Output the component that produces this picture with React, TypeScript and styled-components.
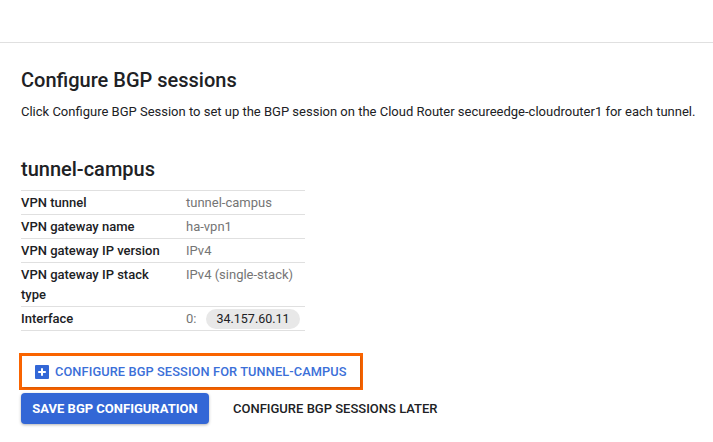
import { createGlobalStyle, styled } from "styled-components"

const rows: { label: string; value: string; chip?: string }[] = [
  { label: "VPN tunnel", value: "tunnel-campus" },
  { label: "VPN gateway name", value: "ha-vpn1" },
  { label: "VPN gateway IP version", value: "IPv4" },
  { label: "VPN gateway IP stack type", value: "IPv4 (single-stack)" },
  { label: "Interface", value: "0:", chip: "34.157.60.11" },
]

const App = () => {
  return (
    <Page>
      <GlobalStyle />
      <TopBar />
      <Content>
        <Title>Configure BGP sessions</Title>
        <Description>
          Click Configure BGP Session to set up the BGP session on the Cloud
          Router secureedge-cloudrouter1 for each tunnel.
        </Description>
        <TunnelName>tunnel-campus</TunnelName>
        <Table>
          {rows.map((row) => (
            <Row key={row.label}>
              <Label>{row.label}</Label>
              <Value>
                {row.value}
                {row.chip && <Chip>{row.chip}</Chip>}
              </Value>
            </Row>
          ))}
        </Table>
        <Highlight>
          <AddButton>
            <PlusIcon viewBox="0 0 14 14">
              <rect width="14" height="14" rx="1" fill="#3367d6" />
              <path d="M7 3.2v7.6M3.2 7h7.6" stroke="#fff" strokeWidth="2" />
            </PlusIcon>
            CONFIGURE BGP SESSION FOR TUNNEL-CAMPUS
          </AddButton>
        </Highlight>
        <Actions>
          <PrimaryButton>SAVE BGP CONFIGURATION</PrimaryButton>
          <TextButton>CONFIGURE BGP SESSIONS LATER</TextButton>
        </Actions>
      </Content>
    </Page>
  )
}

const GlobalStyle = createGlobalStyle`
  body {
    margin: 0;
    background: #ffffff;
    font-family: Roboto, "Liberation Sans", sans-serif;
    color: #202124;
  }
`

const Page = styled.div`
  width: 713px;
  height: 442px;
  overflow: hidden;
`

const TopBar = styled.div`
  height: 42px;
  border-bottom: 1px solid #e0e0e0;
`

const Content = styled.div`
  display: flex;
  flex-direction: column;
  align-items: flex-start;
  padding: 23px 0 0 21px;
`

const Title = styled.h1`
  margin: 0;
  font-size: 20px;
  line-height: 28px;
  font-weight: 500;
`

const Description = styled.p`
  margin: 8px 0 0;
  font-size: 13px;
  line-height: 20px;
  white-space: nowrap;
`

const TunnelName = styled.h2`
  margin: 33px 0 0;
  font-size: 20px;
  line-height: 28px;
  font-weight: 500;
`

const Table = styled.div`
  margin-top: 7px;
  width: 284px;
  border-bottom: 1px solid #e0e0e0;
`

const Row = styled.div`
  display: grid;
  grid-template-columns: 165px 1fr;
  border-top: 1px solid #e0e0e0;
  padding: 2px 0 1px;
  font-size: 13px;
  line-height: 20px;
`

const Label = styled.div`
  font-weight: 500;
  padding-right: 12px;
`

const Value = styled.div`
  color: #757575;
  display: flex;
  align-items: flex-start;
  white-space: nowrap;
`

const Chip = styled.span`
  margin-left: 10px;
  padding: 0 10px;
  height: 20px;
  line-height: 20px;
  border-radius: 10px;
  background: #e8e8e8;
  color: #202124;
  font-size: 12.5px;
`

const Highlight = styled.div`
  margin: 22px 0 0 -2px;
  border: 3px solid #fa6400;
`

const AddButton = styled.button`
  display: flex;
  align-items: center;
  gap: 6px;
  height: 31px;
  padding: 0 13px;
  border: none;
  background: #ffffff;
  box-shadow: 1px 1px 2px rgba(0, 0, 0, 0.15);
  font-family: Roboto, "Liberation Sans", sans-serif;
  font-size: 12.8px;
  font-weight: 500;
  color: #3b6fd8;
  letter-spacing: 0.1px;
  white-space: nowrap;
  cursor: pointer;
`

const PlusIcon = styled.svg`
  width: 14px;
  height: 14px;
  flex-shrink: 0;
`

const Actions = styled.div`
  display: flex;
  align-items: center;
  gap: 12px;
  margin-top: 3px;
`

const PrimaryButton = styled.button`
  height: 31px;
  width: 188px;
  border: none;
  border-radius: 4px;
  background: #3367d6;
  color: #ffffff;
  font-family: Roboto, "Liberation Sans", sans-serif;
  font-size: 13px;
  font-weight: 700;
  box-shadow: 0 1px 3px rgba(0, 0, 0, 0.3);
  cursor: pointer;
`

const TextButton = styled.button`
  height: 31px;
  padding: 0 12px;
  border: none;
  background: transparent;
  color: #202124;
  font-family: Roboto, "Liberation Sans", sans-serif;
  font-size: 13px;
  font-weight: 500;
  cursor: pointer;
`

export default App
